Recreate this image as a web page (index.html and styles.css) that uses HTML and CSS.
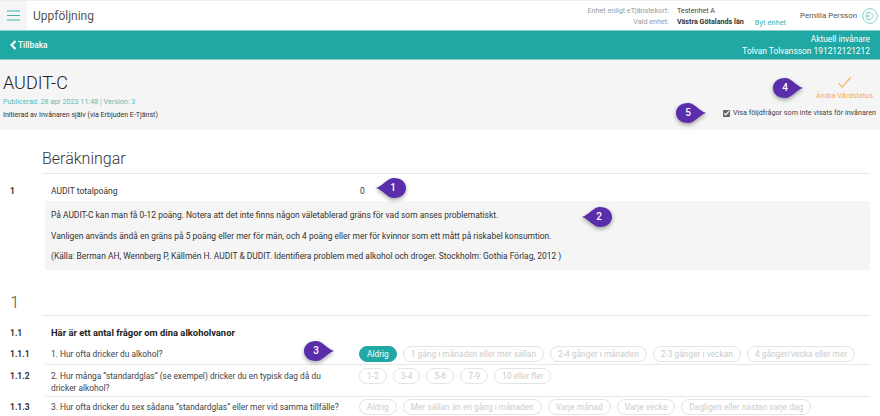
FILE: index.html
```html
<!DOCTYPE html>
<html lang="sv">
<head>
<meta charset="utf-8">
<title>AUDIT-C</title>
<link rel="stylesheet" href="styles.css">
</head>
<body>
<div class="page">
  <header class="topbar">
    <button class="menu" aria-label="Meny"><svg width="13" height="11" viewBox="0 0 13 11"><path d="M0 1h13M0 5.5h13M0 10h13" stroke="#3cb4b0" stroke-width="1.1"/></svg></button>
    <div class="app-title">Uppföljning</div>
    <div class="unit">
      <div class="unit-labels"><span>Enhet enligt eTjänstekort:</span><span>Vald enhet:</span></div>
      <div class="unit-values"><span>Testenhet A</span><b>Västra Götalands län</b></div>
      <a class="unit-change">Byt enhet</a>
    </div>
    <div class="user">Pernilla Persson</div>
    <svg class="logout" width="16" height="16" viewBox="0 0 16 16"><circle cx="8" cy="8" r="7.3" fill="none" stroke="#7fcfcb" stroke-width="1"/><path d="M5 4.5h3.5l3 3.5-3 3.5H5zM3 8h5" fill="none" stroke="#7fcfcb" stroke-width="1"/></svg>
  </header>

  <nav class="bar">
    <a class="back"><svg width="7" height="10" viewBox="0 0 7 10"><path d="M5.5 1 1.5 5l4 4" fill="none" stroke="#fff" stroke-width="2"/></svg>Tillbaka</a>
    <div class="citizen"><span>Aktuell invånare</span><span>Tolvan Tolvansson 191212121212</span></div>
  </nav>

  <section class="head">
    <div class="head-left">
      <h1>AUDIT-C</h1>
      <div class="published">Publicerad: 28 apr 2023 11:48 | Version: 3</div>
      <div class="initiated">Initierad av Invånaren själv (via Erbjuden E-Tjänst)</div>
    </div>
    <div class="head-right">
      <div class="status">
        <svg width="13" height="11" viewBox="0 0 13 11"><path d="M.5 6 4.2 10 12.5.7" fill="none" stroke="#f5a742" stroke-width="1.1"/></svg>
        <span>Ändra Vårdstatus</span>
      </div>
      <label class="follow"><span class="check"><svg width="8" height="8" viewBox="0 0 8 8"><path d="M1.2 4.2 3.2 6.2 6.8 1.8" fill="none" stroke="#fff" stroke-width="1.3"/></svg></span>Visa följdfrågor som inte visats för invånaren</label>
    </div>
  </section>

  <main class="content">
    <h2 class="calc-title">Beräkningar</h2>
    <div class="calc-row"><b class="num">1</b><span class="calc-name">AUDIT totalpoäng</span><span class="calc-value">0</span></div>
    <div class="desc">
      <p>På AUDIT-C kan man få 0-12 poäng. Notera att det inte finns någon väletablerad gräns för vad som anses problematiskt.</p>
      <p>Vanligen används ändå en gräns på 5 poäng eller mer för män, och 4 poäng eller mer för kvinnor som ett mått på riskabel konsumtion.</p>
      <p>(Källa: Berman AH, Wennberg P, Källmén H. AUDIT &amp; DUDIT. Identifiera problem med alkohol och droger. Stockholm: Gothia Förlag, 2012 )</p>
    </div>

    <h2 class="sec-title">1</h2>
    <div class="sub"><b class="qnum">1.1</b><b class="sub-text">Här är ett antal frågor om dina alkoholvanor</b></div>

    <div class="q q-first"><b class="qnum">1.1.1</b><div class="qtext">1. Hur ofta dricker du alkohol?</div>
      <div class="opts"><span class="opt on">Aldrig</span><span class="opt">1 gång i månaden eller mer sällan</span><span class="opt">2-4 gånger i månaden</span><span class="opt">2-3 gånger i veckan</span><span class="opt">4 gånger/vecka eller mer</span></div></div>
    <div class="q q-second"><b class="qnum">1.1.2</b><div class="qtext">2. Hur många ”standardglas” (se exempel) dricker du en typisk dag då du dricker alkohol?</div>
      <div class="opts"><span class="opt">1-2</span><span class="opt">3-4</span><span class="opt">5-6</span><span class="opt">7-9</span><span class="opt">10 eller fler</span></div></div>
    <div class="q q-third"><b class="qnum">1.1.3</b><div class="qtext">3. Hur ofta dricker du sex sådana ”standardglas” eller mer vid samma tillfälle?</div>
      <div class="opts"><span class="opt">Aldrig</span><span class="opt">Mer sällan än en gång i månaden</span><span class="opt">Varje månad</span><span class="opt">Varje vecka</span><span class="opt">Dagligen eller nästan varje dag</span></div></div>
  </main>

  <div class="pin pin-left pin-1"><svg width="30" height="20" viewBox="0 0 30 20"><path d="M0 10C7 8 11 0 18 0c7 0 12 4 12 10s-5 10-12 10C11 20 7 12 0 10z"/></svg><span>1</span></div>
  <div class="pin pin-left pin-2"><svg width="30" height="20" viewBox="0 0 30 20"><path d="M0 10C7 8 11 0 18 0c7 0 12 4 12 10s-5 10-12 10C11 20 7 12 0 10z"/></svg><span>2</span></div>
  <div class="pin pin-right pin-3"><svg width="30" height="20" viewBox="0 0 30 20"><path d="M30 10C23 8 19 0 12 0 5 0 0 4 0 10s5 10 12 10c7 0 11-8 18-10z"/></svg><span>3</span></div>
  <div class="pin pin-right pin-4"><svg width="30" height="20" viewBox="0 0 30 20"><path d="M30 10C23 8 19 0 12 0 5 0 0 4 0 10s5 10 12 10c7 0 11-8 18-10z"/></svg><span>4</span></div>
  <div class="pin pin-right pin-5"><svg width="30" height="20" viewBox="0 0 30 20"><path d="M30 10C23 8 19 0 12 0 5 0 0 4 0 10s5 10 12 10c7 0 11-8 18-10z"/></svg><span>5</span></div>
</div>
</body>
</html>
```
FILE: styles.css
```css
* { box-sizing: border-box; }
html, body { margin: 0; padding: 0; }
body { font-family: Roboto, "Liberation Sans", sans-serif; color: #333; background: #fff; overflow: hidden; }
.page { position: relative; width: 880px; height: 416px; overflow: hidden; }

.topbar { display: flex; align-items: center; height: 31px; background: #fff; border-top: 1px solid #eee; border-bottom: 1px solid #8fcfcc; }
.menu { width: 27px; height: 29px; padding: 0; border: 0; background: #f5f5f5; display: flex; align-items: center; justify-content: center; }
.app-title { margin-left: 6px; font-size: 12px; color: #555; flex: 1; }
.unit { display: flex; font-size: 7.2px; line-height: 11px; padding-top: 1px; }
.unit-labels { display: flex; flex-direction: column; align-items: flex-end; color: #999; margin-right: 8px; }
.unit-values { display: flex; flex-direction: column; color: #444; }
.unit-values b { color: #333; font-weight: 700; }
.unit-change { align-self: flex-end; margin: 0 0 -1px 11px; font-size: 7.5px; color: #3cb4b0; }
.user { margin-left: 14px; margin-right: 5px; font-size: 7.9px; color: #555; }
.logout { margin-right: 2px; }

.bar { height: 29px; background: #20a8a4; color: #fff; display: flex; justify-content: space-between; align-items: center; padding: 0 10px; border-bottom: 1px solid #8fcfcc; }
.back { display: flex; align-items: center; gap: 1px; font-size: 8.4px; font-weight: 500; }
.citizen { display: flex; flex-direction: column; align-items: flex-end; font-size: 8.4px; line-height: 12px; }

.head { height: 70px; background: #f5f5f5; display: flex; justify-content: space-between; padding: 0 4px 0 3px; }
.head-left h1 { margin: 12px 0 0; font-size: 18px; line-height: 21px; font-weight: 300; color: #222; }
.published { margin-top: 4px; font-size: 7.2px; line-height: 10px; color: #5cbcb8; }
.initiated { margin-top: 3px; font-size: 7.05px; line-height: 10px; color: #333; }
.head-right { display: flex; flex-direction: column; align-items: flex-end; }
.status { display: flex; flex-direction: column; align-items: center; margin: 17px 3px 0 0; font-size: 7.4px; line-height: 10px; color: #f5ab55; gap: 3px; }
.follow { display: flex; align-items: center; gap: 3px; margin-top: 7px; font-size: 7.2px; line-height: 10px; color: #444; }
.check { width: 7px; height: 7px; background: #666; border-radius: 1px; display: flex; align-items: center; justify-content: center; }

.content { padding: 0 10px; }
.calc-title { margin: 20px 0 0 32px; padding-bottom: 5px; font-size: 16px; line-height: 18px; font-weight: 300; color: #333; border-bottom: 1px solid #e8e8e8; }
.calc-row { display: flex; align-items: center; height: 27px; font-size: 8.5px; padding-top: 6px; }
.num { width: 41px; font-weight: 700; font-size: 8.5px; }
.calc-name { width: 309px; }
.desc { margin-left: 35px; padding: 6px 6px 1px; height: 69px; background: #f5f5f5; font-size: 8.45px; line-height: 11px; color: #333; }
.desc p { margin: 3px 0 9.5px; }

.sec-title { margin: 22px 0 0; font-size: 17px; line-height: 20px; font-weight: 300; color: #555; }
.sub { display: flex; align-items: flex-start; height: 30px; margin: 3px 0 0 32px; padding-top: 11px; border-top: 1px solid #e8e8e8; line-height: 12px; }
.sub .qnum { margin-left: -32px; }
.sub-text { font-size: 9.4px; font-weight: 700; color: #222; }
.qnum { flex: none; width: 41px; font-size: 8.5px; font-weight: 700; color: #333; }
.q { display: flex; align-items: flex-start; font-size: 8.4px; line-height: 12px; color: #444; }
.qtext { flex: none; width: 308px; }
.opts { display: flex; gap: 6px; }
.opt { display: block; height: 16px; padding: 0 7px; border: 1px solid #e4e4e4; border-radius: 8px; font-size: 8.4px; line-height: 14px; color: #ccc; white-space: nowrap; }
.opt.on { background: #20a8a4; border-color: #20a8a4; color: #fff; }
.q-first { height: 20px; }
.q-first .opts { margin-top: 1px; }
.q-first .qnum, .q-first .qtext { margin-top: 3px; }
.q-second { height: 32px; }
.q-second .qtext { padding-right: 22px; }
.q-second .opts { margin-top: 3px; }
.q-second .qnum, .q-second .qtext { margin-top: 5px; }
.q-third .opts { margin-top: 2px; }
.q-third .qnum, .q-third .qtext { margin-top: 4px; }
.q-first, .q-second { background: linear-gradient(#e8e8e8, #e8e8e8) 35px 100% / 825px 1px no-repeat; }

.pin { position: absolute; width: 30px; height: 20px; }
.pin svg { display: block; fill: #5a2dab; filter: drop-shadow(0 2px 2px rgba(0,0,0,.35)); overflow: visible; }
.pin span { position: absolute; top: 0; width: 20px; text-align: center; font-size: 10px; line-height: 20px; font-weight: 500; color: #fff; }
.pin-left span { left: 7px; }
.pin-right span { left: 2px; }
.pin-1 { left: 376px; top: 178px; }
.pin-2 { left: 582px; top: 207px; }
.pin-3 { left: 304px; top: 341px; }
.pin-4 { left: 773px; top: 78px; }
.pin-5 { left: 676px; top: 103px; }
```
